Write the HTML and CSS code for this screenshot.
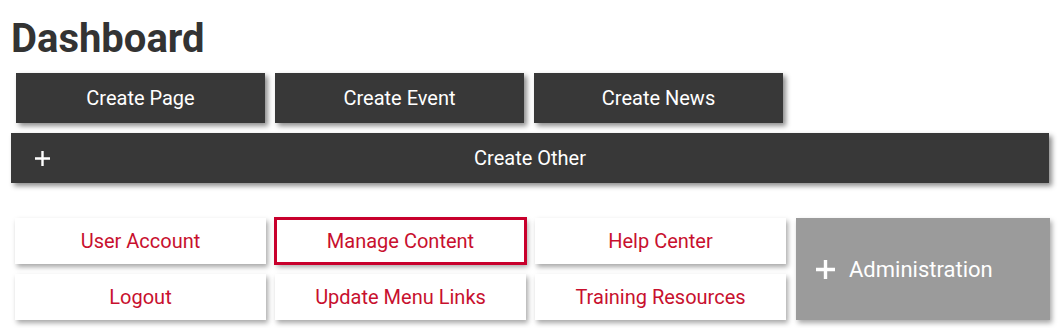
FILE: index.html
```html
<!DOCTYPE html>
<html>

<head>
  <meta charset="utf-8" />
  <meta name="viewport" content="width=device-width, initial-scale=1" />
  <title>Dashboard</title>
  <link rel="stylesheet" href="styles.css">
</head>

<body>
  <div class="dashboard">
    <h1 class="title">Dashboard</h1>

    <div class="create-row">
      <a class="dark-btn" href="#">Create Page</a>
      <a class="dark-btn" href="#">Create Event</a>
      <a class="dark-btn" href="#">Create News</a>
    </div>

    <a class="dark-btn create-other" href="#">
      <svg class="plus-small" width="15" height="15" viewBox="0 0 15 15">
        <path d="M7.5 0 V15 M0 7.5 H15" stroke="#fff" stroke-width="2.4" />
      </svg>
      <span>Create Other</span>
    </a>

    <div class="link-grid">
      <a class="link-btn" href="#">User Account</a>
      <a class="link-btn active" href="#">Manage Content</a>
      <a class="link-btn" href="#">Help Center</a>
      <a class="admin-btn" href="#">
        <svg width="19" height="19" viewBox="0 0 19 19">
          <path d="M9.5 0 V19 M0 9.5 H19" stroke="#fff" stroke-width="3.4" />
        </svg>
        <span>Administration</span>
      </a>
      <a class="link-btn" href="#">Logout</a>
      <a class="link-btn" href="#">Update Menu Links</a>
      <a class="link-btn" href="#">Training Resources</a>
    </div>
  </div>
</body>

</html>
```

FILE: styles.css
```css
html,
body {
  margin: 0;
  background-color: #FFFFFF;
  font-family: Roboto, "Liberation Sans", Arial, sans-serif;
}

a {
  text-decoration: none;
}

.dashboard {
  padding: 15px 0 8px 11px;
  width: 1040px;
}

.title {
  margin: 0 0 10px 0;
  font-size: 40px;
  line-height: 48px;
  font-weight: 700;
  color: #333333;
}

.create-row {
  display: flex;
  gap: 10px;
  margin-left: 5px;
}

.dark-btn {
  display: flex;
  justify-content: center;
  align-items: center;
  width: 249px;
  height: 50px;
  background: #383838;
  color: #FFFFFF;
  font-size: 20px;
  box-shadow: 3px 3px 5px rgba(0, 0, 0, .45);
}

.create-other {
  display: grid;
  grid-template-columns: 1fr auto 1fr;
  width: 1038px;
  padding: 0 24px;
  box-sizing: border-box;
  margin-top: 10px;
}

.create-other .plus-small {
  justify-self: start;
}

.link-grid {
  display: grid;
  grid-template-columns: repeat(4, 251px);
  grid-template-rows: 46px 46px;
  gap: 10px 9px;
  margin: 35px 0 0 4px;
}

.link-btn {
  display: flex;
  justify-content: center;
  align-items: center;
  background: #FFFFFF;
  color: #C8102E;
  font-size: 20px;
  box-shadow: 2px 3px 5px rgba(0, 0, 0, .35);
}

.link-btn.active {
  outline: 3px solid #C8002C;
  outline-offset: -2px;
}

.admin-btn {
  grid-column: 4;
  grid-row: 1 / span 2;
  width: 254px;
  display: flex;
  align-items: center;
  gap: 14px;
  padding-left: 20px;
  box-sizing: border-box;
  margin-left: 1px;
  background: #9B9B9B;
  color: #FFFFFF;
  font-size: 22px;
  box-shadow: 2px 3px 5px rgba(0, 0, 0, .35);
}
```
